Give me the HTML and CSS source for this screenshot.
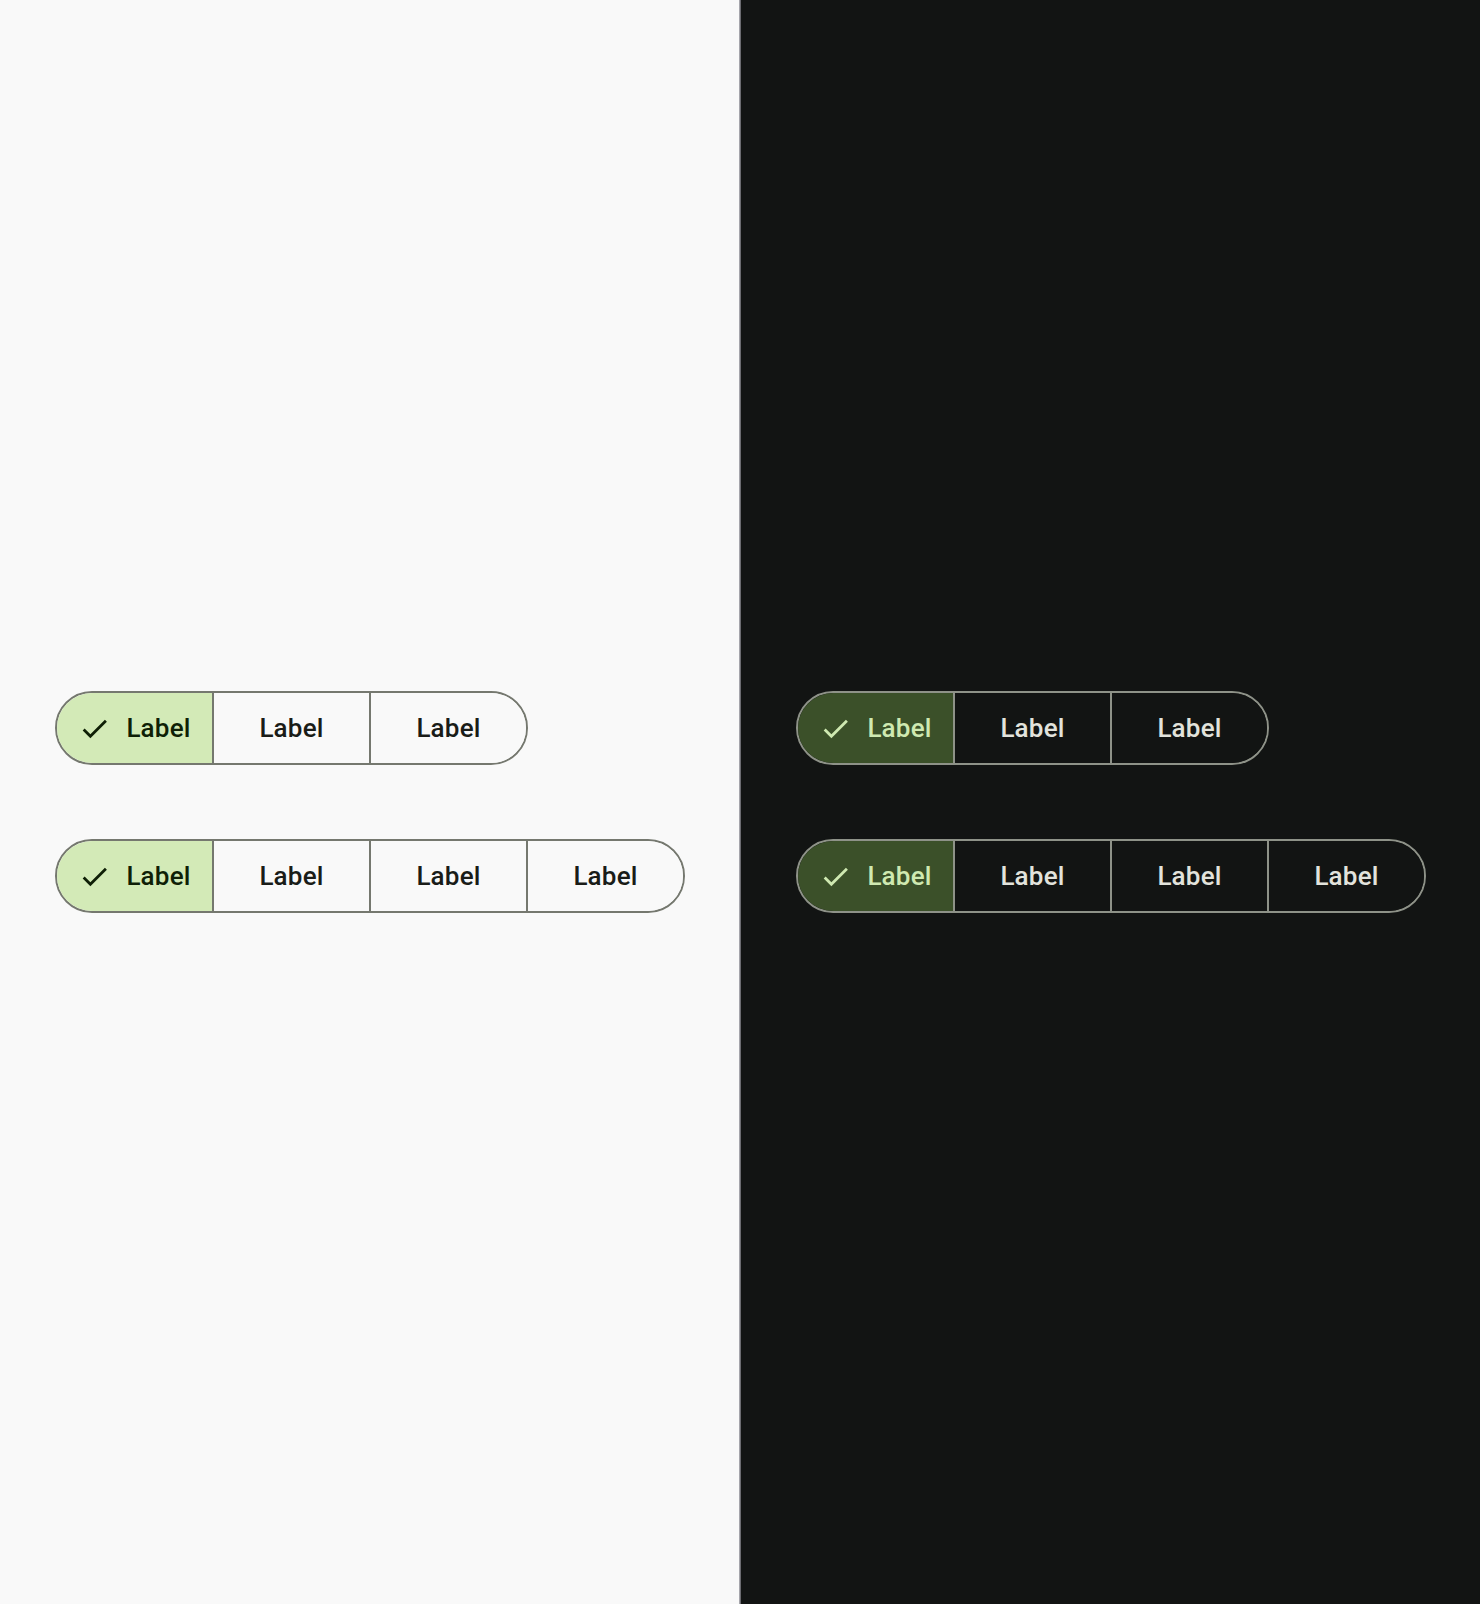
FILE: index.html
```html
<!DOCTYPE html>
<html lang="en">
<head>
<meta charset="utf-8">
<title>Segmented buttons</title>
<link rel="stylesheet" href="styles.css">
</head>
<body>
<div class="page">
  <section class="panel light">
    <div class="seg">
      <button class="item selected"><svg class="check" viewBox="0 0 24 24"><path d="M9 16.17L4.83 12l-1.42 1.41L9 19 21 7l-1.41-1.41z"/></svg><span>Label</span></button>
      <button class="item"><span>Label</span></button>
      <button class="item"><span>Label</span></button>
    </div>
    <div class="seg">
      <button class="item selected"><svg class="check" viewBox="0 0 24 24"><path d="M9 16.17L4.83 12l-1.42 1.41L9 19 21 7l-1.41-1.41z"/></svg><span>Label</span></button>
      <button class="item"><span>Label</span></button>
      <button class="item"><span>Label</span></button>
      <button class="item"><span>Label</span></button>
    </div>
  </section>
  <div class="divider"></div>
  <section class="panel dark">
    <div class="seg">
      <button class="item selected"><svg class="check" viewBox="0 0 24 24"><path d="M9 16.17L4.83 12l-1.42 1.41L9 19 21 7l-1.41-1.41z"/></svg><span>Label</span></button>
      <button class="item"><span>Label</span></button>
      <button class="item"><span>Label</span></button>
    </div>
    <div class="seg">
      <button class="item selected"><svg class="check" viewBox="0 0 24 24"><path d="M9 16.17L4.83 12l-1.42 1.41L9 19 21 7l-1.41-1.41z"/></svg><span>Label</span></button>
      <button class="item"><span>Label</span></button>
      <button class="item"><span>Label</span></button>
      <button class="item"><span>Label</span></button>
    </div>
  </section>
</div>
</body>
</html>
```

FILE: styles.css
```css
html, body {
  margin: 0;
  padding: 0;
}
body {
  font-family: Roboto, "Liberation Sans", sans-serif;
}
.page {
  display: flex;
  width: 1480px;
  height: 1604px;
}
.panel {
  flex: none;
  display: flex;
  flex-direction: column;
  justify-content: center;
  align-items: flex-start;
  gap: 74px;
  padding-left: 55px;
  box-sizing: border-box;
  height: 100%;
}
.panel.light {
  width: 739px;
  background: #f9f9f9;
  --outline: #75786f;
  --sel-bg: #d3eab7;
  --sel-fg: #0f1f06;
  --fg: #1a1c18;
  --bg: #f9f9f9;
}
.panel.dark {
  flex: 1;
  background: #121413;
  --outline: #8e9288;
  --sel-bg: #3b5029;
  --sel-fg: #cfe9b1;
  --fg: #e2e3dc;
  --bg: #121413;
}
.divider {
  flex: none;
  width: 2px;
  background: linear-gradient(to right, #a5a5ab 0 1px, #6c6c71 1px 2px);
}
.seg {
  display: inline-flex;
  height: 74px;
  box-sizing: border-box;
  border: 2px solid var(--outline);
  border-radius: 37px;
  overflow: hidden;
}
.item {
  display: flex;
  align-items: center;
  justify-content: center;
  gap: 15px;
  width: 157px;
  height: 100%;
  margin: 0;
  padding: 0;
  box-sizing: border-box;
  border: none;
  border-left: 2px solid var(--outline);
  background: var(--bg);
  color: var(--fg);
  font-family: Roboto, "Liberation Sans", sans-serif;
  font-weight: 500;
  font-size: 26px;
  letter-spacing: 0.2px;
  line-height: 1;
}
.item:first-child {
  border-left: none;
  width: 155px;
}
.item.selected {
  background: var(--sel-bg);
  color: var(--sel-fg);
}
.check {
  width: 33px;
  height: 33px;
  fill: currentColor;
  flex: none;
}
```
